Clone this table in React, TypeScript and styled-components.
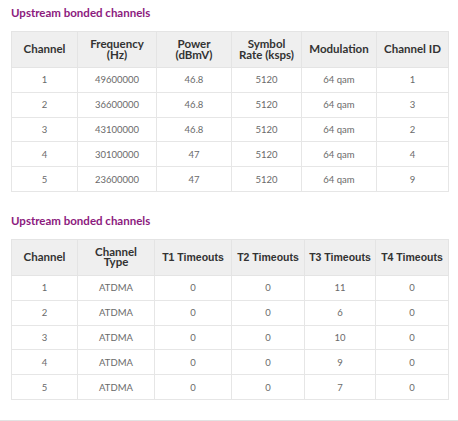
import React from "react";
import styled, { createGlobalStyle } from "styled-components";

const Global = createGlobalStyle`
  html, body { margin: 0; padding: 0; background: #ffffff; }
  body { font-family: "Lato", "Liberation Sans", sans-serif; }
`;

const Page = styled.div`
  width: 458px;
  height: 421px;
  box-sizing: border-box;
  border-bottom: 1px solid #e2e2e2;
  display: flex;
  flex-direction: column;
  padding: 6px 0 0 11px;
`;

const Section = styled.section<{ $gap: number }>`
  display: flex;
  flex-direction: column;
  gap: 11px;
  margin-top: ${(p) => p.$gap}px;
`;

const Title = styled.h2`
  margin: 0;
  font-family: "Lato", sans-serif;
  font-weight: 700;
  font-size: 11.5px;
  line-height: 14px;
  color: #8c1a7e;
`;

const Table = styled.table`
  border-collapse: collapse;
  width: 437px;
  table-layout: fixed;
`;

const Th = styled.th<{ $arial?: boolean }>`
  background: #efefef;
  border: 1px solid #e4e4e4;
  height: 35px;
  padding: 0 2px;
  font-family: ${(p) => (p.$arial ? '"Liberation Sans", Arial, sans-serif' : '"Lato", sans-serif')};
  font-weight: 700;
  font-size: ${(p) => (p.$arial ? "10.5px" : "11.5px")};
  line-height: 10.5px;
  color: #333333;
  text-align: center;
  white-space: pre-line;
`;

const Td = styled.td`
  border: 1px solid #e6e6e6;
  height: 23.8px;
  padding: 0;
  font-family: "Lato", sans-serif;
  font-size: 9.5px;
  color: #6a6a6a;
  text-align: center;
`;

type Col = { label: string; width: number; arial?: boolean };

const DataTable = ({ cols, rows }: { cols: Col[]; rows: (string | number)[][] }) => (
  <Table>
    <colgroup>
      {cols.map((c, i) => (
        <col key={i} style={{ width: c.width }} />
      ))}
    </colgroup>
    <thead>
      <tr>
        {cols.map((c, i) => (
          <Th key={i} $arial={c.arial}>
            {c.label}
          </Th>
        ))}
      </tr>
    </thead>
    <tbody>
      {rows.map((r, i) => (
        <tr key={i}>
          {r.map((v, j) => (
            <Td key={j}>{v}</Td>
          ))}
        </tr>
      ))}
    </tbody>
  </Table>
);

const cols1: Col[] = [
  { label: "Channel", width: 66 },
  { label: "Frequency\n(Hz)", width: 79 },
  { label: "Power\n(dBmV)", width: 75 },
  { label: "Symbol\nRate (ksps)", width: 70 },
  { label: "Modulation", width: 75 },
  { label: "Channel ID", width: 72 },
];

const rows1 = [
  [1, "49600000", "46.8", "5120", "64 qam", 1],
  [2, "36600000", "46.8", "5120", "64 qam", 3],
  [3, "43100000", "46.8", "5120", "64 qam", 2],
  [4, "30100000", "47", "5120", "64 qam", 4],
  [5, "23600000", "47", "5120", "64 qam", 9],
];

const cols2: Col[] = [
  { label: "Channel", width: 66 },
  { label: "Channel\nType", width: 77 },
  { label: "T1 Timeouts", width: 77, arial: true },
  { label: "T2 Timeouts", width: 73, arial: true },
  { label: "T3 Timeouts", width: 71, arial: true },
  { label: "T4 Timeouts", width: 73, arial: true },
];

const rows2 = [
  [1, "ATDMA", 0, 0, 11, 0],
  [2, "ATDMA", 0, 0, 6, 0],
  [3, "ATDMA", 0, 0, 10, 0],
  [4, "ATDMA", 0, 0, 9, 0],
  [5, "ATDMA", 0, 0, 7, 0],
];

export default function App() {
  return (
    <>
      <Global />
      <Page>
        <Section $gap={0}>
          <Title>Upstream bonded channels</Title>
          <DataTable cols={cols1} rows={rows1} />
        </Section>
        <Section $gap={22}>
          <Title>Upstream bonded channels</Title>
          <DataTable cols={cols2} rows={rows2} />
        </Section>
      </Page>
    </>
  );
}
